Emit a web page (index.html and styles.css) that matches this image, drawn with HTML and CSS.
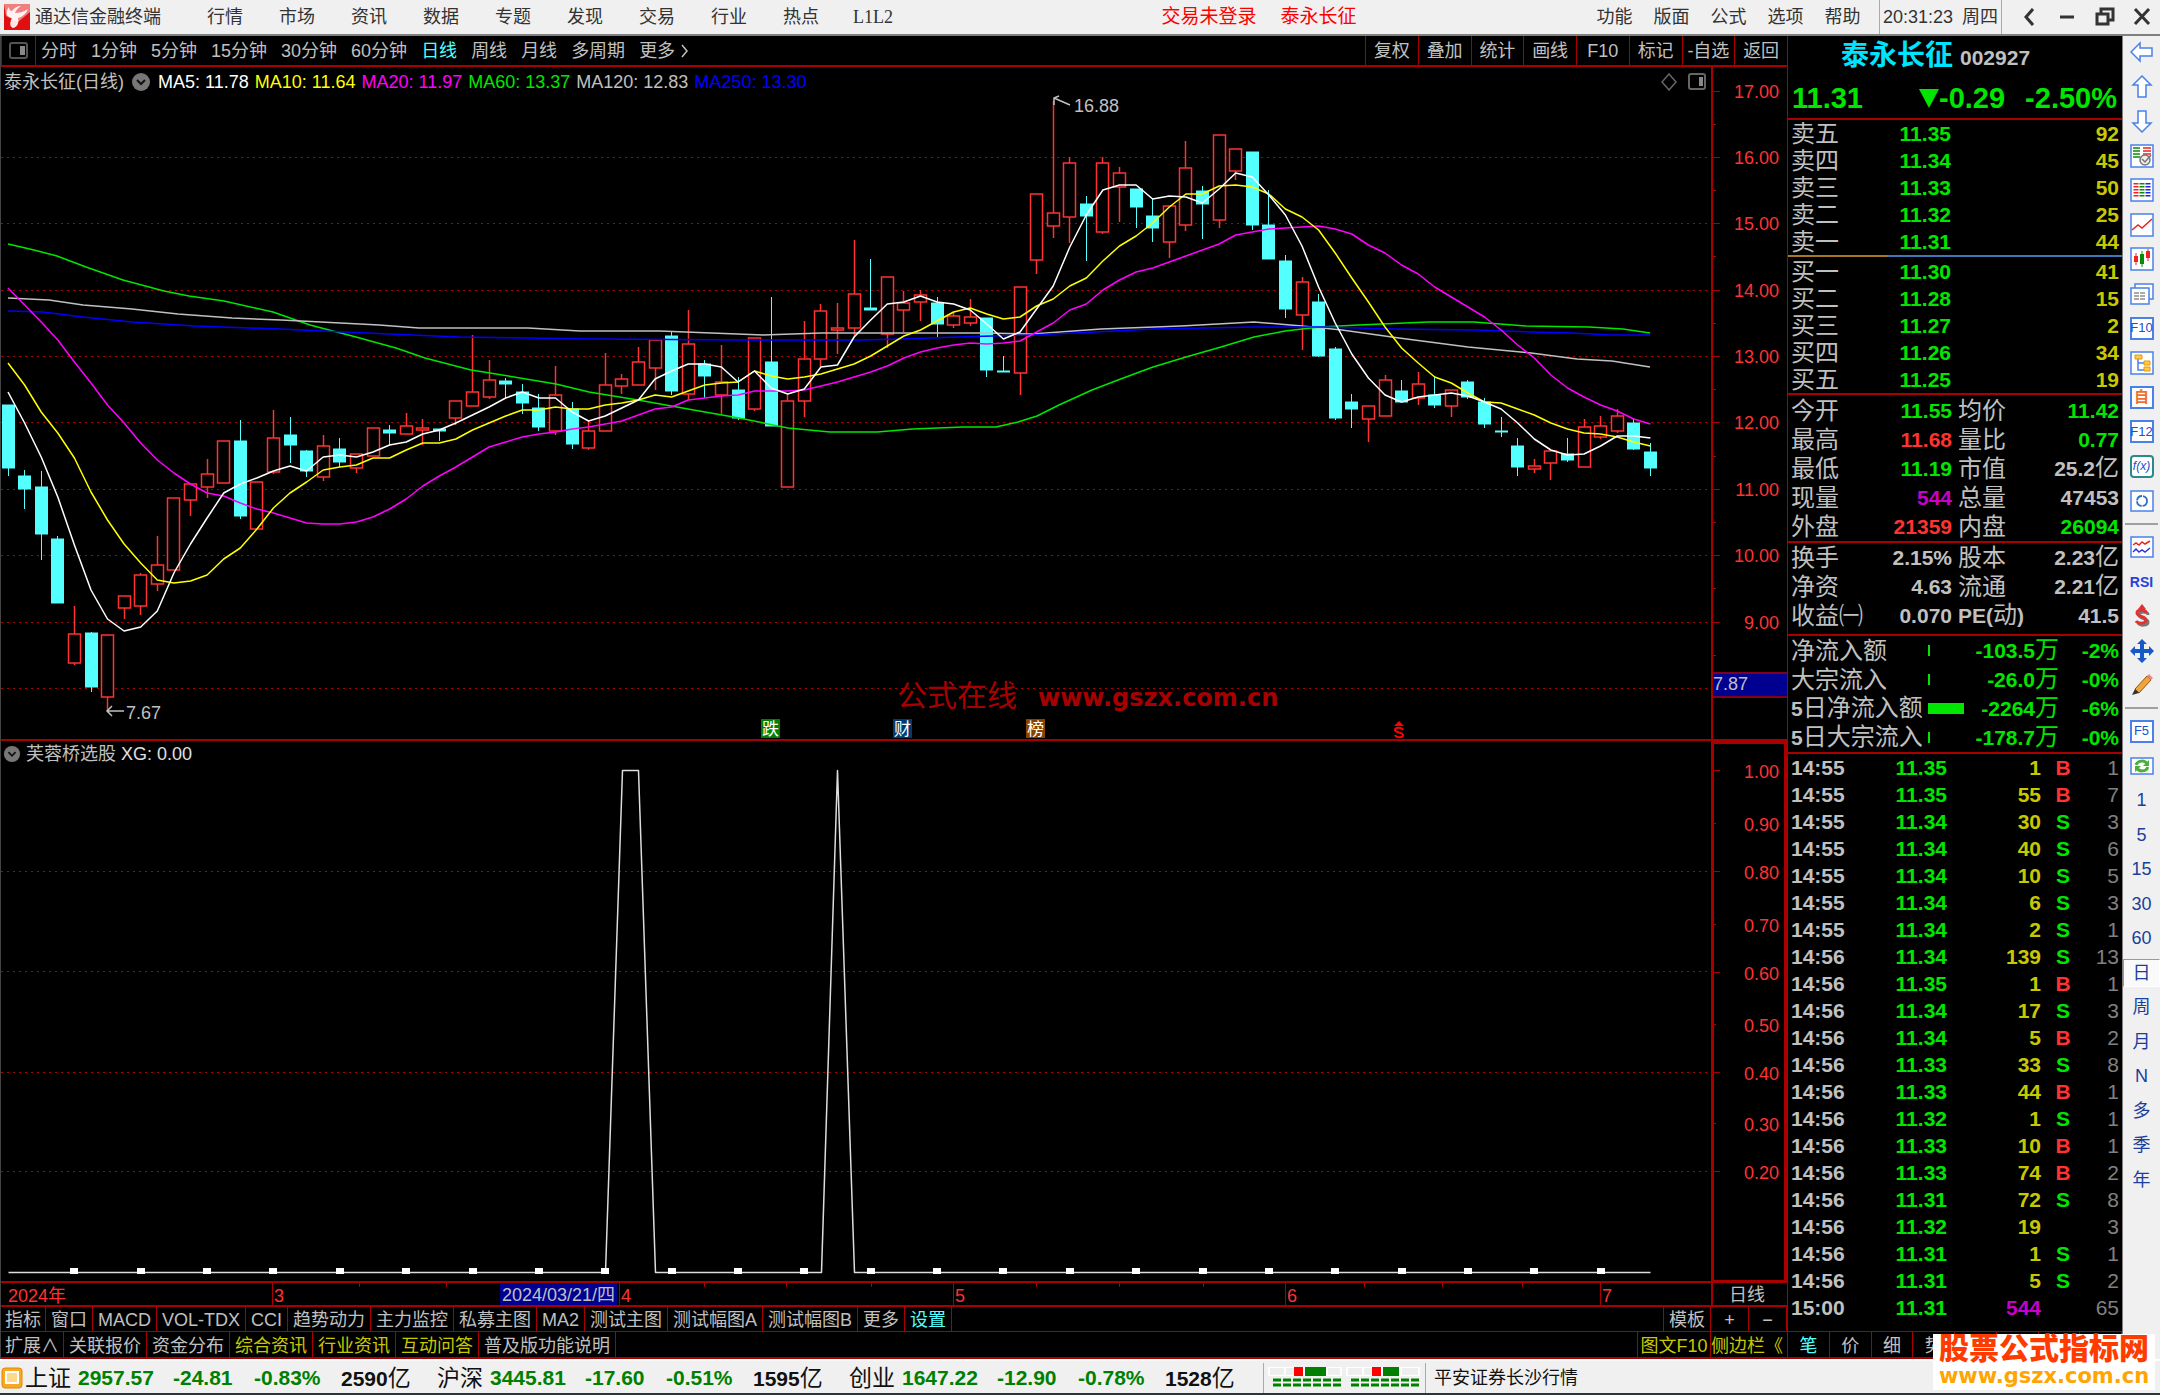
FILE: index.html
```html
<!DOCTYPE html>
<html lang="zh-CN">
<head>
<meta charset="utf-8">
<title>通达信金融终端</title>
<link rel="stylesheet" href="styles.css">
</head>
<body>
<header class="menubar">
  <svg class="logo" width="26" height="26" viewBox="0 0 26 26"><rect width="26" height="26" fill="#e01010"/><path d="M0 0h26v8L14 18 2 12z" fill="#f08080"/><path d="M5 3C1 8 2 13 8 14c-2 4-3 8 1 10 5-1 6-6 5-10 4-1 8-4 10-9-5 3-9 4-13 4 1-3 3-5 6-7-4 0-7 2-9 5-2 0-3-2-3-4z" fill="#fff" opacity=".9"/></svg>
  <span class="brand">通达信金融终端</span>
  <nav class="menu">
    <button>行情</button><button>市场</button><button>资讯</button><button>数据</button><button>专题</button><button>发现</button><button>交易</button><button>行业</button><button>热点</button><button class="serif">L1L2</button>
  </nav>
  <div class="login"><a href="#">交易未登录</a><a href="#">泰永长征</a></div>
  <nav class="menu menu-right">
    <button>功能</button><button>版面</button><button>公式</button><button>选项</button><button>帮助</button>
  </nav>
  <div class="clock"><time>20:31:23</time><span>周四</span></div>
  <div class="winctl">
    <button aria-label="收起"><svg width="20" height="20" viewBox="0 0 20 20"><path d="M13 2 6 10l7 8"/></svg></button>
    <button aria-label="最小化"><svg width="20" height="20" viewBox="0 0 20 20"><path d="M3 10h14"/></svg></button>
    <button aria-label="还原"><svg width="20" height="20" viewBox="0 0 20 20"><path d="M6 6V2h12v11h-4M2 7h11v10H2z"/></svg></button>
    <button aria-label="关闭"><svg width="20" height="20" viewBox="0 0 20 20"><path d="m3 2 14 15M17 2 3 17"/></svg></button>
  </div>
</header>

<main class="workspace">
  <section class="charts">
    <div class="periods">
      <button class="split" aria-label="分栏"><svg width="20" height="18" viewBox="0 0 20 18"><rect x="1" y="1" width="17" height="15" rx="2" fill="none" stroke="#555" stroke-width="2"/><path d="M11 4h5v9h-5z" fill="#888"/></svg></button>
      <div class="period-list">
        <button>分时</button><button>1分钟</button><button>5分钟</button><button>15分钟</button><button>30分钟</button><button>60分钟</button><button class="on">日线</button><button>周线</button><button>月线</button><button>多周期</button><button class="more">更多<svg width="10" height="16" viewBox="0 0 10 16"><path d="m2 2 5 6-5 6" fill="none" stroke="#c0c0c0" stroke-width="1.5"/></svg></button>
      </div>
      <div class="actions"><button>复权</button><button>叠加</button><button>统计</button><button>画线</button><button>F10</button><button>标记</button><button>-自选</button><button>返回</button></div>
    </div>

    <div class="pane pane-main">
      <div class="plot">
        <svg id="kline" class="canvas"></svg>
        <div class="legend">
          <span>泰永长征(日线)</span>
          <svg width="20" height="20" viewBox="0 0 20 20"><circle cx="10" cy="10" r="9" fill="#777"/><path d="m6 8 4 4 4-4" fill="none" stroke="#111" stroke-width="2"/></svg>
          <div class="averages"><span class="ma5">MA5: 11.78</span><span class="ma10">MA10: 11.64</span><span class="ma20">MA20: 11.97</span><span class="ma60">MA60: 13.37</span><span class="ma120">MA120: 12.83</span><span class="ma250">MA250: 13.30</span></div>
          <div class="corner"><svg width="46" height="18" viewBox="0 0 46 18" fill="none" stroke="#666"><path d="m9 1 7 8-7 8-7-8z" stroke-width="1.5"/><rect x="29" y="1" width="16" height="15" rx="2" stroke-width="2"/><path d="M39 4h4v9h-4z" fill="#888" stroke="none"/></svg></div>
        </div>
      </div>
      <div class="axis"><svg id="kaxis" class="canvas"></svg></div>
    </div>

    <div class="pane pane-sub">
      <div class="plot">
        <svg id="signal" class="canvas"></svg>
        <div class="legend legend-sub">
          <svg width="18" height="18" viewBox="0 0 20 20"><circle cx="10" cy="10" r="9" fill="#777"/><path d="m6 8 4 4 4-4" fill="none" stroke="#111" stroke-width="2"/></svg>
          <span>芙蓉桥选股</span><span class="xg">XG: 0.00</span>
        </div>
      </div>
      <div class="axis axis-box"><svg id="saxis" class="canvas"></svg></div>
    </div>

    <div class="dates">
      <div class="plot"><svg id="dates" class="canvas"></svg></div>
      <div class="axis">日线</div>
    </div>

    <div class="tabs">
      <button>指标</button><button>窗口</button><button>MACD</button><button>VOL-TDX</button><button>CCI</button><button>趋势动力</button><button>主力监控</button><button>私募主图</button><button>MA2</button><button>测试主图</button><button>测试幅图A</button><button>测试幅图B</button><button>更多</button><button class="on">设置</button>
      <span class="push"></span><button class="tpl">模板</button><button class="half">+</button><button class="half">−</button>
    </div>
    <div class="tabs tabs-links">
      <button>扩展∧</button><button>关联报价</button><button>资金分布</button><button class="gold">综合资讯</button><button class="gold">行业资讯</button><button class="gold">互动问答</button><button>普及版功能说明</button>
      <span class="push"></span><button class="gold f10">图文F10</button><button class="gold side">侧边栏《</button>
    </div>
  </section>

  <section class="quote">
    <h1><span class="name">泰永长征</span> <span class="code">002927</span></h1>
    <div class="last"><b>11.31</b><b class="chg"><svg width="20" height="20" viewBox="0 0 20 20"><path d="M0 1h20L10 20z" fill="#00e600"/></svg>-0.29</b><b class="pct">-2.50%</b></div>
    <table class="book">
      <tr><th>卖五</th><td>11.35</td><td>92</td></tr><tr><th>卖四</th><td>11.34</td><td>45</td></tr><tr><th>卖三</th><td>11.33</td><td>50</td></tr><tr><th>卖二</th><td>11.32</td><td>25</td></tr><tr><th>卖一</th><td>11.31</td><td>44</td></tr>
    </table>
    <div class="balance"></div>
    <table class="book buy">
      <tr><th>买一</th><td>11.30</td><td>41</td></tr><tr><th>买二</th><td>11.28</td><td>15</td></tr><tr><th>买三</th><td>11.27</td><td>2</td></tr><tr><th>买四</th><td>11.26</td><td>34</td></tr><tr><th>买五</th><td>11.25</td><td>19</td></tr>
    </table>
    <table class="facts">
      <tr><th>今开</th><td class="g">11.55</td><th>均价</th><td class="g">11.42</td></tr>
      <tr><th>最高</th><td class="r">11.68</td><th>量比</th><td class="g">0.77</td></tr>
      <tr><th>最低</th><td class="g">11.19</td><th>市值</th><td>25.2<i>亿</i></td></tr>
      <tr><th>现量</th><td class="m">544</td><th>总量</th><td>47453</td></tr>
      <tr><th>外盘</th><td class="r">21359</td><th>内盘</th><td class="g">26094</td></tr>
    </table>
    <table class="facts facts-more">
      <tr><th>换手</th><td>2.15%</td><th>股本</th><td>2.23<i>亿</i></td></tr>
      <tr><th>净资</th><td>4.63</td><th>流通</th><td>2.21<i>亿</i></td></tr>
      <tr><th>收益㈠</th><td>0.070</td><th><b>PE(</b>动<b>)</b></th><td>41.5</td></tr>
    </table>
    <table class="flow">
      <tr><th>净流入额</th><td><span class="bar"></span></td><td>-103.5<i>万</i></td><td>-2%</td></tr>
      <tr><th>大宗流入</th><td><span class="bar"></span></td><td>-26.0<i>万</i></td><td>-0%</td></tr>
      <tr><th><b>5</b>日净流入额</th><td><span class="bar" style="width:36px"></span></td><td>-2264<i>万</i></td><td>-6%</td></tr>
      <tr><th><b>5</b>日大宗流入</th><td><span class="bar"></span></td><td>-178.7<i>万</i></td><td>-0%</td></tr>
    </table>
    <table class="ticks"><tbody id="ticks"></tbody></table>
    <div class="quote-tabs"><button class="on">笔</button><button>价</button><button>细</button><button>势</button><span></span><span></span><span></span><span></span></div>
  </section>

  <aside class="tools">
    <ul>
      <li><button aria-label="后退"><svg viewBox="0 0 24 24"><path d="M1 12 10 3v5h12v8H10v5z" fill="#fff" stroke="#4a80e8" stroke-width="1.5"/></svg></button></li>
      <li><button aria-label="上移"><svg viewBox="0 0 24 24"><path d="M12 1 3 10h5v12h8V10h5z" fill="#fff" stroke="#4a80e8" stroke-width="1.5"/></svg></button></li>
      <li><button aria-label="下移"><svg viewBox="0 0 24 24"><path d="M12 23 3 14h5V2h8v12h5z" fill="#fff" stroke="#4a80e8" stroke-width="1.5"/></svg></button></li>
      <li><button aria-label="自选"><svg viewBox="0 0 24 24"><rect class="fr" x="1" y="1" width="22" height="22"/><path d="M3 4h7M3 7h7M3 10h7M3 13h7" stroke="#0a8a0a" stroke-width="1.5"/><path d="M13 4h8M13 7h8M13 10h8" stroke="#e22" stroke-width="1.5"/><circle cx="15" cy="16" r="5" fill="#eee" stroke="#777" stroke-width="1.5"/><path d="m12 15 3 3 6-7" fill="none" stroke="#777" stroke-width="1.5"/></svg></button></li>
      <li><button aria-label="报价"><svg viewBox="0 0 24 24"><rect class="fr" x="1" y="1" width="22" height="22"/><g stroke-width="5" stroke-dasharray="1.5 1.5"><path d="M6 5v15" stroke="#e22"/><path d="M12 5v15" stroke="#0a8a0a"/><path d="M18 5v15" stroke="#22d"/></g></svg></button></li>
      <li><button aria-label="分时"><svg viewBox="0 0 24 24"><rect class="fr" x="1" y="1" width="22" height="22"/><path d="m2 17 6-5 4 3 10-9" fill="none" stroke="#e22" stroke-width="1.5"/></svg></button></li>
      <li><button aria-label="K线"><svg viewBox="0 0 24 24"><rect class="fr" x="1" y="1" width="22" height="22"/><path d="M6 6v12M18 2v12" stroke="#e22"/><path d="M12 4v16" stroke="#0a8a0a"/><path d="M4 9h4v6H4zM16 4h4v7h-4z" fill="#e22"/><path d="M10 7h4v10h-4z" fill="#0a8a0a"/></svg></button></li>
      <li><button aria-label="窗口"><svg viewBox="0 0 24 24"><rect class="fr" x="5" y="2" width="18" height="15"/><rect class="fr" x="1" y="6" width="18" height="16"/><path d="M4 11h12M4 14h12M4 17h12" stroke="#555" stroke-dasharray="5 1"/></svg></button></li>
      <li><button class="key">F10</button></li>
      <li><button aria-label="树形"><svg viewBox="0 0 24 24"><rect class="fr" x="1" y="1" width="22" height="22"/><path d="M8 7v12h7M8 12h7" fill="none" stroke="#4a80e8" stroke-width="1.5"/><path d="M5 4h7v4H5zM14 10h6v4h-6zM14 16h6v4h-6z" fill="#ffc94d" stroke="#e59a00"/></svg></button></li>
      <li><button class="key self">自</button></li>
      <li><button class="key">F12</button></li>
      <li><button class="key fx">f(x)</button></li>
      <li><button aria-label="刷新"><svg viewBox="0 0 24 24"><rect class="fr" x="1" y="2" width="22" height="20"/><circle cx="12" cy="12" r="5" fill="none" stroke="#2a70c8" stroke-width="1.8" stroke-dasharray="7 1"/></svg></button></li>
    </ul>
    <ul>
      <li><button aria-label="叠加"><svg viewBox="0 0 24 24"><rect class="fr" x="1" y="2" width="22" height="20"/><path d="m3 10 3-2 3 2 3-3 3 2 5-3" fill="none" stroke="#e22" stroke-width="1.5"/><path d="m3 17 3-3 3 3 3-2 3 2 5-4" fill="none" stroke="#33d" stroke-width="1.5"/></svg></button></li>
      <li><button class="rsi">RSI</button></li>
      <li><button class="dollar" aria-label="资金"><svg viewBox="0 0 24 24"><path d="M17 10c0-4-9-4-9 0s9 3 9 7-8 4-10 1" fill="none" stroke="#777" stroke-width="3" transform="translate(1 1)"/><path d="M16 9c0-4-9-4-9 0s9 3 9 7-8 4-10 1M12 3v3" fill="none" stroke="#d33" stroke-width="3"/><path d="m12 0 4 5H8z" fill="#d33"/></svg></button></li>
      <li><button aria-label="移动"><svg viewBox="0 0 24 24"><path d="m12 0 5 5h-3v5h5V7l5 5-5 5v-3h-5v5h3l-5 5-5-5h3v-5H5v3l-5-5 5-5v3h5V5H7z" fill="#1659c4"/></svg></button></li>
      <li><button aria-label="画笔"><svg viewBox="0 0 24 24"><path d="M5 16 17 3l4 4L9 20z" fill="#f2a33a" stroke="#8a5a20"/><path d="m17 3 2-2 4 4-2 2z" fill="#e88"/><path d="m5 16-3 6 7-2z" fill="#333"/></svg></button></li>
    </ul>
    <ul>
      <li><button class="key">F5</button></li>
      <li><button aria-label="同步"><svg viewBox="0 0 24 24"><rect class="fr" x="1" y="4" width="22" height="16"/><path d="M6 11c2-5 9-5 11-1M18 13c-2 5-9 5-11 1" fill="none" stroke="#4cae3c" stroke-width="3"/><path d="M19 6v6h-6zM5 18v-6h6z" fill="#4cae3c"/></svg></button></li>
      <li><button>1</button></li><li><button>5</button></li><li><button>15</button></li><li><button>30</button></li><li><button>60</button></li>
      <li><button class="pressed">日</button></li><li><button>周</button></li><li><button>月</button></li><li><button>N</button></li><li><button>多</button></li><li><button>季</button></li><li><button>年</button></li>
    </ul>
  </aside>
</main>

<footer class="status">
  <svg width="22" height="22" viewBox="0 0 22 22"><rect x="1" y="1" width="20" height="20" rx="3" fill="#f9a825" stroke="#e08a00"/><rect x="5" y="5" width="12" height="11" fill="#ffd98a" stroke="#fff" stroke-width="2"/></svg>
  <div class="index"><span>上证</span><b>2957.57</b><b>-24.81</b><b>-0.83%</b><span class="amt"><b>2590</b>亿</span></div>
  <div class="index"><span>沪深</span><b>3445.81</b><b>-17.60</b><b>-0.51%</b><span class="amt"><b>1595</b>亿</span></div>
  <div class="index"><span>创业</span><b>1647.22</b><b>-12.90</b><b>-0.78%</b><span class="amt"><b>1528</b>亿</span></div>
  <div class="meters">
    <svg width="154" height="22" viewBox="0 0 154 22"><path d="M0 1h74v9H0zM78 1h74v9H78z" fill="#fff"/><path d="M2 2h14v7H2zM18 2h8v7h-8zM60 2h12v7H60zM80 2h14v7H80zM96 2h8v7h-8zM134 2h16v7h-16z" fill="#eee"/><path d="M26 1h9v9h-9zM104 1h9v9h-9z" fill="#f00"/><path d="M37 1h21v9H37zM115 1h16v9h-16z" fill="#008000"/><path d="M5 14h69M5 19h69M83 14h69M83 19h69" stroke="#008000" stroke-width="3" stroke-dasharray="8 2"/></svg>
  </div>
  <span class="broker">平安证券长沙行情</span>
</footer>

<div class="stamp"><strong>股票公式指标网</strong><span>www.gszx.com.cn</span></div>
<script src="charts.js"></script>
</body>
</html>
```
FILE: styles.css
```css
* { box-sizing: border-box; }
html, body { height: 100%; }
body {
  margin: 0;
  min-height: 100vh;
  display: grid;
  grid-template-rows: 36px minmax(0, 1fr) 36px;
  background: #000;
  color: #c0c0c0;
  font: 18px/24px "Liberation Sans", "Noto Sans CJK SC", sans-serif;
  position: relative;
  overflow: hidden;
}
button { background: none; border: 0; padding: 0; margin: 0; color: inherit; font: inherit; white-space: nowrap; }
a { color: inherit; text-decoration: none; }
i { font-style: normal; font-weight: 400; }
table { border-collapse: separate; border-spacing: 0; width: 100%; table-layout: fixed; }
th, td { padding: 0; white-space: nowrap; }

/* menu bar */
.menubar { display: flex; align-items: center; background: #f0f0f0; color: #333; border-bottom: 2px solid #808080; padding: 0 0 0 4px; }
.brand { margin: 0 28px 0 5px; }
.menu { display: flex; }
.menu button { width: 72px; }
.menu .serif { font-family: "Liberation Serif", serif; }
.login { display: flex; gap: 24px; color: #f00; font-size: 19px; margin: 0 auto; padding-left: 23px; }
.menu-right button { width: 57px; }
.clock { display: flex; gap: 9px; border: solid #aaa; border-width: 0 1px; padding: 5px 3px; margin-left: 8px; }
.winctl { display: flex; width: 158px; padding: 0 8px 0 18px; justify-content: space-between; }
.winctl svg { display: block; fill: none; stroke: #333; stroke-width: 3; }

/* chart column */
.workspace { display: grid; grid-template-columns: minmax(0, 1fr) 336px 37px; min-height: 0; }
.charts { display: flex; flex-direction: column; min-width: 0; min-height: 0; border-left: 1px solid #444; }
.periods { display: flex; height: 31px; border-bottom: 2px solid #a80000; }
.periods button { padding-top: 1px; }
.split { width: 35px; border-left: 1px solid #a80000; border-right: 1px solid #a80000; }
.split svg { display: block; margin: 0 auto; }
.period-list { display: flex; gap: 14px; padding-left: 5px; }
.more { display: flex; align-items: center; gap: 5px; }
.on { color: #54ffff; }
.actions { margin-left: auto; display: grid; grid-template-columns: repeat(8, 1fr); width: 422px; }
.actions button { border-left: 1px solid #a80000; }
.pane { display: flex; min-height: 0; border-bottom: 2px solid #a80000; }
.pane-main { flex: 674 1 0; }
.pane-sub { flex: 542 1 0; }
.plot { flex: 1; position: relative; min-width: 0; }
.axis { width: 76px; position: relative; border-left: 2px solid #a80000; }
.axis-box { border: 3px solid #a80000; border-bottom-width: 1px; }
.canvas { position: absolute; inset: 0; width: 100%; height: 100%; display: block; overflow: hidden; }
.legend { position: relative; display: flex; align-items: center; gap: 7px; padding: 3px 5px 0 3px; }
.legend-sub { padding: 1px 2px 0; gap: 5px; }
.averages { display: flex; gap: 6px; }
.corner { margin-left: auto; height: 18px; line-height: 18px; }
.ma5 { color: #fff; }
.ma10 { color: #ff0; }
.ma20 { color: #f0f; }
.ma60 { color: #00e600; }
.ma120 { color: #c0c0c0; }
.ma250 { color: #00f; }
.xg { color: #e0e0e0; }
.dates { display: flex; height: 24px; border-bottom: 2px solid #a80000; }
.dates .axis { text-align: center; line-height: 24px; padding-right: 6px; }
.tabs { display: flex; height: 25px; border-bottom: 1px solid #a80000; }
.tabs button { padding: 2px 5px 0; border-right: 1px solid #a80000; line-height: 22px; }
.tabs button:first-child { padding: 2px 4px 0; }
.push { flex: 1; border-right: 1px solid #a80000; margin-right: 0; }
.tabs .half { width: 38px; }
.tabs-links { height: 27px; border-bottom-width: 2px; }
.tabs-links button { padding-top: 3px; }
.tabs-links button:first-child { padding-top: 3px; }
.tabs .f10 { width: 73px; padding: 3px 0 0; }
.tabs .side { width: 76px; padding: 3px 0 0; overflow: hidden; text-align: left; border-right: 0; }
.gold { color: #c8c800; }

/* svg parts */
.grid { stroke: #b00000; stroke-width: 1; stroke-dasharray: 2 4; }
.rule { stroke: #a80000; stroke-width: 1; }
.up { fill: #000; stroke: #ff3232; stroke-width: 1.5; }
.down { fill: #54ffff; stroke: #54ffff; stroke-width: 1; }
.line { fill: none; stroke-width: 1.5; stroke-linejoin: round; }
.red { fill: #ff3232; }
.grey { fill: #c0c0c0; }
.arrow { fill: none; stroke: #c0c0c0; stroke-width: 1.5; }
.mark { fill: #fff; font-size: 17px; }
.ad { fill: #a80000; font-size: 30px; }
.ad-url { fill: #a80000; font: bold 24px "DejaVu Sans", sans-serif; }

/* quote column */
.quote { display: flex; flex-direction: column; border-left: 1px solid #a80000; border-right: 1px solid #808080; min-height: 0; }
.quote h1 { margin: 0; height: 38px; padding-left: 53px; font-size: 28px; line-height: 40px; white-space: nowrap; display: flex; gap: 7px; }
.name { color: #00e5ff; }
.code { font-size: 21px; line-height: 44px; }
.last { height: 46px; display: flex; align-items: center; padding: 4px 5px 0 4px; color: #00e600; font-size: 29px; border-bottom: 2px solid #a80000; }
.chg { margin-left: auto; display: flex; align-items: center; }
.pct { margin-left: 20px; }
.quote th { font-weight: 400; font-size: 24px; text-align: left; padding-left: 3px; }
.quote td { font-size: 21px; font-weight: 700; text-align: right; padding-right: 3px; }
.quote td i { font-size: 24px; }
.book tr { height: 27px; }
.book td:nth-child(2) { color: #00e600; width: 92px; }
.book td:nth-child(3) { color: #c8c800; width: 168px; }
.balance { height: 2px; background: linear-gradient(90deg, #a87820 30%, #3a78b8 30%); margin-bottom: 1px; }
.buy { border-bottom: 2px solid #a80000; margin-bottom: 1px; }
.facts tr, .flow tr { height: 29px; }
.facts th:first-child { width: 79px; }
.facts td { width: 88px; }
.facts td:nth-child(4) { width: 92px; }
.facts th b { font-size: 21px; }
.facts-more { border-top: 2px solid #a80000; margin-bottom: 4px; }
.g { color: #00e600; }
.r { color: #ff3232; }
.m { color: #c800c8; }
.flow { border-top: 2px solid #a80000; border-bottom: 2px solid #a80000; }
.flow th { width: 140px; }
.flow th b { font-size: 21px; }
.flow td { color: #00e600; }
.flow td:nth-child(2) { width: 36px; padding: 0; }
.flow td:nth-child(3) { padding: 0; width: 95px; }
.bar { display: block; width: 2px; height: 11px; background: #00e600; }
.ticks td { height: 27px; line-height: 27px; }
.ticks td:nth-child(1) { text-align: left; padding: 0 0 0 3px; width: 68px; }
.ticks td:nth-child(2) { color: #00e600; width: 94px; }
.ticks td:nth-child(3) { color: #c8c800; width: 94px; }
.ticks td:nth-child(4) { text-align: center; padding: 0; width: 38px; }
.ticks td:nth-child(5) { color: #808080; font-weight: 400; }
.ticks td.m { color: #c800c8; }
.quote-tabs { margin-top: auto; height: 28px; display: grid; grid-template-columns: repeat(8, 1fr); border: solid #a80000; border-width: 1px 0 2px; }
.quote-tabs > * { border-right: 1px solid #a80000; padding-top: 2px; }

/* tool strip */
.tools { background: #f0f0f0; color: #1a3f9c; }
.tools ul { list-style: none; margin: 0; padding: 0; }
.tools ul:first-child { margin-top: -1px; }
.tools ul + ul { border-top: 2px solid #a0a0a0; margin: 5px 2px 0; padding: 5px 0 0; }
.tools ul + ul li { margin: 0 -2px; }
.tools li { height: 34px; display: flex; align-items: center; justify-content: center; }
.tools li:nth-child(even) { height: 35px; }
.tools button { width: 100%; height: 28px; display: flex; align-items: center; justify-content: center; }
.tools svg { width: 24px; height: 24px; flex: none; }
.fr { fill: #fff; stroke: #4a80e8; stroke-width: 1.5; }
.tools .key { width: 24px; height: 23px; background: #fff; border: 2px solid #4a80e8; font-size: 13px; color: #1a50d0; }
.tools .self { color: #f07030; font-weight: 700; font-size: 15px; }
.tools .fx { border-color: #2a8a8a; border-radius: 4px; font-style: italic; font-size: 12px; }
.tools .rsi { font-weight: 700; font-size: 14px; color: #2a40d8; }
.tools .pressed { background: #fafafa; border: 1px solid #aaa; border-color: #999 #fff #fff #999; }

/* status bar */
.status { display: flex; align-items: center; background: #f0f0f0; color: #111; border-top: 2px solid #fff; border-bottom: 2px solid #2a3440; padding: 2px 0 0 1px; }
.index { display: grid; grid-template-columns: 53px 95px 81px 87px 96px; font-size: 23px; line-height: 30px; padding-left: 2px; margin-right: -2px; }
.index b { font-size: 21px; color: #008000; }
.index .amt b { color: #111; }
.meters { border: solid #aaa; border-width: 0 1px; padding: 3px 4px 0; height: 30px; margin: 0 8px 0 4px; width: 163px; }

.stamp { position: absolute; right: 5px; bottom: 5px; width: 222px; height: 56px; background: #fff; display: flex; flex-direction: column; align-items: center; font-weight: 700; }
.stamp strong { color: #ff3c00; font-size: 30px; line-height: 30px; font-weight: 900; }
.stamp span { color: #ffa500; font: bold 21px/24px "DejaVu Sans", sans-serif; }
```
FILE: charts.js
```js
// Candles: body top, body bottom, high, low, direction (1 up, 0 down), in plot units.
const candles = [
[405,468,405,476,0],[476,489,470,509,0],[487,534,471,560,0],[539,603,536,603,0],[634,663,606,665,1],[633,687,632,692,0],[635,697,635,710,1],[596,608,596,619,1],[575,606,573,615,1],[565,584,536,591,1],
[498,570,498,570,1],[484,500,484,516,1],[474,487,459,498,1],[441,483,441,483,1],[441,516,420,519,0],[482,529,482,529,1],[438,472,410,474,1],[435,445,417,463,0],[451,471,450,477,0],[446,477,435,481,1],
[449,462,438,467,0],[454,468,454,473,1],[428,456,428,456,1],[430,433,425,445,0],[426,434,413,434,1],[428,430,419,445,1],[429,431,429,441,0],[401,418,401,425,1],[392,406,335,406,1],[380,397,360,399,1],
[381,384,378,398,0],[392,403,384,414,0],[408,427,394,431,0],[395,431,366,435,1],[409,444,402,449,0],[431,448,421,450,1],[385,431,353,431,1],[379,386,374,394,1],[362,385,347,385,1],[340,368,340,390,1],
[336,391,332,395,0],[344,394,310,400,1],[364,376,360,398,0],[382,395,345,414,1],[390,418,377,420,0],[338,409,338,411,1],[362,426,297,426,0],[401,487,394,487,1],[359,401,321,417,1],[311,359,304,367,1],
[328,330,303,354,1],[294,328,240,337,1],[308,310,259,310,0],[277,334,277,348,1],[303,310,291,332,1],[295,302,290,321,1],[303,324,297,338,0],[316,325,312,328,1],[317,323,299,326,1],[318,370,318,377,0],
[371,372,356,372,0],[287,373,287,395,1],[194,260,194,274,1],[213,226,101,238,1],[163,217,157,243,1],[204,216,196,261,0],[163,232,157,234,1],[173,187,167,222,1],[189,207,189,228,0],[216,228,198,242,0],
[206,242,206,258,1],[168,225,141,231,1],[191,204,186,239,0],[135,220,135,228,1],[149,171,149,180,1],[152,225,152,230,0],[225,259,190,259,0],[261,309,255,318,0],[282,315,277,350,1],[302,356,294,357,0],
[349,418,347,420,0],[402,409,394,428,0],[406,419,406,442,1],[380,416,375,416,1],[391,402,380,402,0],[384,398,372,405,1],[395,405,376,408,0],[390,406,390,417,1],[382,397,380,399,0],[402,424,398,428,0],
[431,432,417,437,0],[446,467,438,476,0],[466,469,459,473,1],[451,463,451,480,1],[454,460,438,462,0],[427,467,419,467,1],[426,437,416,439,1],[416,431,409,433,1],[423,449,419,450,0],[452,468,443,476,0]];

// Daily averages, one value per candle.
const daily = {
'#ffffff': [392,423,457,497,545,590,619,631,627,611,573,544,518,493,484,478,471,466,471,457,455,457,452,445,442,434,430,423,415,407,398,392,398,398,412,421,416,408,400,379,371,364,364,367,382,371,388,394,389,367,365,337,320,304,302,296,302,304,310,324,339,332,309,286,247,215,190,185,185,199,196,197,203,189,173,177,195,215,246,287,323,354,378,395,402,397,395,393,396,402,409,423,439,450,455,454,446,436,436,438],
'#ffff00': [363,385,412,433,458,492,520,544,563,580,583,581,575,559,548,529,508,493,482,470,467,465,458,458,450,443,443,439,430,423,416,410,410,407,409,409,405,403,400,395,397,391,385,383,382,371,376,379,377,374,369,364,356,346,336,330,321,312,308,314,319,317,306,299,286,278,261,246,236,223,207,194,194,186,185,187,194,209,217,230,253,278,302,327,348,363,377,383,393,402,403,409,415,423,429,433,434,437,442,446],
'#ff00ff': [288,305,322,340,362,383,405,423,443,460,473,484,493,496,503,509,513,518,523,524,524,522,517,509,499,486,476,467,457,447,442,437,434,432,429,427,424,421,415,409,407,400,398,396,395,391,391,391,390,386,382,377,372,366,358,352,348,345,343,344,343,341,332,323,310,304,290,280,272,268,262,256,250,244,235,232,229,228,227,226,229,234,245,253,265,274,287,297,307,317,330,345,358,375,388,397,405,411,419,424]
};
// Long averages as x,y points.
const slow = {
'#00e600': '8,244 34,250 57,256 86,267 123,280 164,291 189,296 224,301 273,312 310,325 356,337 396,348 425,358 471,370 490,373 556,384 589,392 638,400 688,409 739,418 788,428 830,432 877,432 913,429 963,427 996,427 1018,422 1037,416 1059,405 1092,390 1118,380 1153,367 1186,357 1221,347 1254,337 1285,331 1320,327 1359,325 1428,322 1474,322 1526,326 1589,327 1623,329 1650,333',
'#c0c0c0': '8,298 49,300 83,305 132,309 178,314 232,318 281,320 321,322 379,325 419,328 528,328 580,331 660,331 763,335 821,333 900,333 986,333 1032,334 1101,329 1181,326 1254,322 1302,326 1342,330 1399,338 1468,347 1531,353 1577,359 1612,361 1650,367',
'#0000ff': '8,311 43,312 83,317 132,322 195,326 281,329 344,332 459,337 597,339 746,340 861,340 900,339 957,337 1032,335 1095,332 1153,329 1254,327 1325,327 1394,329 1474,330 1531,332 1572,333 1612,335 1650,335'
};
const priceY = p => 90.5 + (17 - p) * 66.37;
const candleX = i => 8 + 16.59 * i;
const signalY = { '1.00': 770, '0.90': 823, '0.80': 871, '0.70': 924, '0.60': 972, '0.50': 1024, '0.40': 1072, '0.30': 1123, '0.20': 1171 };

// Maps plot units to pixels of the svg; left and top are the units at its corner.
function frame(id, w, h, left, top) {
  const el = document.getElementById(id);
  const sx = el.clientWidth / w, sy = el.clientHeight / h;
  return { el, x: v => +((v - left) * sx).toFixed(1), y: v => +((v - top) * sy).toFixed(1) };
}
const seg = (x1, y1, x2, y2, c) => `<line x1="${x1}" y1="${y1}" x2="${x2}" y2="${y2}" class="${c}"/>`;
const text = (x, y, s, c, a = 'start') => `<text x="${x}" y="${y}" text-anchor="${a}" class="${c}">${s}</text>`;
const path = (pts, c) => `<polyline class="line" stroke="${c}" points="${pts}"/>`;
const half = v => Math.round(v) + 0.5;

function drawKline() {
  const f = frame('kline', 1710, 672, 1, 67);
  let s = '';
  for (let p = 8; p <= 16; p++) s += seg(0, half(f.y(priceY(p))), '100%', half(f.y(priceY(p))), 'grid');
  s += text(f.x(897), f.y(706), '公式在线', 'ad') + text(f.x(1038), f.y(706), 'www.gszx.com.cn', 'ad-url');
  candles.forEach(([t, b, h, l, up], i) => {
    const x = half(f.x(candleX(i)) - 0.5), c = up ? 'up' : 'down';
    s += seg(x, f.y(h), x, f.y(up ? t : l), c);
    if (up) s += seg(x, f.y(b), x, f.y(l), c);
    s += `<rect x="${x - 6}" y="${f.y(t)}" width="12" height="${Math.max(1, f.y(b) - f.y(t))}" class="${c}"/>`;
  });
  for (const c in slow) s += path(slow[c].split(' ').map(q => { const [x, y] = q.split(','); return f.x(x) + ',' + f.y(y); }).join(' '), c);
  for (const c of Object.keys(daily).reverse()) s += path(daily[c].map((y, i) => f.x(candleX(i)) + ',' + f.y(y)).join(' '), c);
  const ax = f.x(1054), ay = f.y(98), bx = f.x(107), by = f.y(711);
  s += `<path class="arrow" d="M${ax} ${ay}l16 7M${ax} ${ay + 7}v-7l5 -2"/>` + text(f.x(1074), f.y(112), '16.88', 'grey');
  s += `<path class="arrow" d="M${bx} ${by}h17M${bx + 5} ${by - 5}l-5 5 5 5"/>` + text(f.x(126), f.y(719), '7.67', 'grey');
  [[761, '跌', '#008000'], [893, '财', '#003a70'], [1026, '榜', '#8a4000']].forEach(([x, t, c]) => {
    s += `<rect x="${f.x(x)}" y="${f.y(719)}" width="19" height="19" fill="${c}"/>` + text(f.x(x) + 1, f.y(735), t, 'mark');
  });
  s += `<path d="M${f.x(1399)} ${f.y(721)}l5 5h-10z" fill="#f00"/><path d="M${f.x(1403)} ${f.y(730)}c-1-3-8-3-8 0s8 2 8 5-7 3-8 0" fill="none" stroke="#f00" stroke-width="2"/>`;
  f.el.innerHTML = s;

  const a = frame('kaxis', 74, 672, 0, 67);
  s = '';
  for (let p = 17; p >= 8; p--) {
    const y = half(a.y(priceY(p)));
    s += seg(0, y, 7, y, 'rule');
    if (p > 8) s += seg(0, half(a.y(priceY(p - 0.5))), 3, half(a.y(priceY(p - 0.5))), 'rule') + text(66, y + 6, p + '.00', 'red', 'end');
  }
  s += `<rect x="-2" y="${a.y(673)}" width="80" height="24" fill="#000090" stroke="#800020" stroke-width="2"/>` + text(0, a.y(690), '7.87', 'grey');
  a.el.innerHTML = s;
}

function drawSignal() {
  const f = frame('signal', 1710, 540, 1, 741);
  let s = '';
  [871, 971, 1072, 1171].forEach(y => s += seg(0, half(f.y(y)), '100%', half(f.y(y)), 'grid'));
  s += path([[8, 1272], [605, 1272], [622, 770], [638, 770], [655, 1272], [821, 1272], [837, 770], [854, 1272], [1650, 1272]].map(([x, y]) => half(f.x(x)) + ',' + half(f.y(y))).join(' '), '#ddd');
  for (let i = 4; i < 100; i += 4) s += `<rect x="${Math.round(f.x(candleX(i))) - 4}" y="${Math.round(f.y(1268))}" width="8" height="6" fill="#fff"/>`;
  f.el.innerHTML = s;

  const a = frame('saxis', 70, 536, 0, 744);
  s = '';
  Object.entries(signalY).forEach(([t, y], n) => {
    const v = half(a.y(y));
    s += seg(0, v, n % 2 ? 2 : 6, v, 'rule') + text(65, v + 7, t, 'red', 'end');
  });
  a.el.innerHTML = s;
}

function drawDates() {
  const f = frame('dates', 1710, 22, 1, 0);
  let s = text(f.x(8), 19, '2024年', 'red');
  [[272, 3], [619, 4], [953, 5], [1285, 6], [1600, 7]].forEach(([x, t]) => s += seg(half(f.x(x)), 0, half(f.x(x)), 22, 'rule') + text(f.x(x) + 2, 19, t, 'red'));
  [359, 446, 704, 786, 871, 1036, 1119, 1203, 1364, 1442, 1522].forEach(x => s += seg(half(f.x(x)), 0, half(f.x(x)), 4, 'rule'));
  s += `<rect x="${f.x(500)}" y="0" width="117" height="22" fill="#000090"/>` + text(f.x(502), 18, '2024/03/21/四', 'grey');
  f.el.innerHTML = s;
}

const deals = '14:55 11.35 1 B 1|14:55 11.35 55 B 7|14:55 11.34 30 S 3|14:55 11.34 40 S 6|14:55 11.34 10 S 5|14:55 11.34 6 S 3|14:55 11.34 2 S 1|14:56 11.34 139 S 13|14:56 11.35 1 B 1|14:56 11.34 17 S 3|14:56 11.34 5 B 2|14:56 11.33 33 S 8|14:56 11.33 44 B 1|14:56 11.32 1 S 1|14:56 11.33 10 B 1|14:56 11.33 74 B 2|14:56 11.31 72 S 8|14:56 11.32 19 - 3|14:56 11.31 1 S 1|14:56 11.31 5 S 2|15:00 11.31 544 - 65';
document.getElementById('ticks').innerHTML = deals.split('|').map(row => {
  const [t, p, v, d, n] = row.split(' ');
  return `<tr><td>${t}</td><td>${p}</td><td class="${+v > 500 ? 'm' : ''}">${v}</td><td class="${d === 'B' ? 'r' : 'g'}">${d === '-' ? '' : d}</td><td>${n}</td></tr>`;
}).join('');

function draw() { drawKline(); drawSignal(); drawDates(); }
draw();
addEventListener('resize', draw);
```
